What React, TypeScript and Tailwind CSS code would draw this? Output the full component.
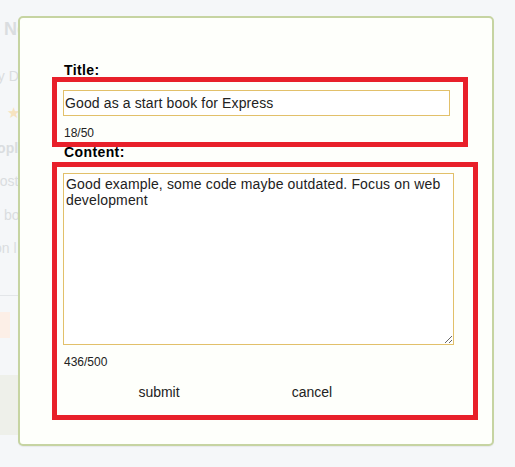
const titleText = "Good as a start book for Express";
const contentText =
  "Good example, some code maybe outdated. Focus on web development";

const BackgroundPage = () => {
  return (
    <div className="flex flex-col text-[#dadde0]">
      <div className="mt-[19px] ml-[4px] h-[20px] text-[18px] leading-[20px] font-bold whitespace-nowrap">
        New Books
      </div>
      <div className="mt-[29px] -ml-[10px] h-[16px] text-[14px] leading-[16px] whitespace-nowrap">
        by Dev
      </div>
      <div className="mt-[22px] ml-[7px] h-[14px] text-[15px] leading-[14px] text-[#f7e3c0]">
        ★
      </div>
      <div className="mt-[20px] -ml-[20px] h-[16px] text-[14px] leading-[16px] font-semibold whitespace-nowrap">
        People
      </div>
      <div className="mt-[17px] -ml-[12px] h-[16px] text-[14px] leading-[16px] whitespace-nowrap">
        most
      </div>
      <div className="mt-[18px] ml-[4px] h-[16px] text-[14px] leading-[16px] whitespace-nowrap">
        book
      </div>
      <div className="mt-[17px] -ml-[6px] h-[16px] text-[14px] leading-[16px] whitespace-nowrap">
        on l
      </div>
      <div className="mt-[39px] h-px w-[40px] bg-[#e3e6e9]" />
      <div className="mt-[16px] h-[26px] w-[10px] bg-[#fcefe7]" />
      <div className="mt-[37px] h-[60px] w-[40px] bg-[#eef0ea]" />
    </div>
  );
};

export default function App() {
  return (
    <div className="relative w-[515px] h-[467px] overflow-hidden bg-[#f5f7f9] font-['Liberation_Sans',Arial,sans-serif]">
      <BackgroundPage />

      <div className="absolute left-[18px] top-[16px] w-[476px] h-[430px] rounded-[5px] border-2 border-[#c6d4a2] bg-[#fefffb] shadow-[0_1px_1px_rgba(0,0,0,0.06)] pl-[32px] pt-[45px]">
        <div className="pl-[12px] h-[15px] text-[14px] leading-[15px] font-bold text-black tracking-[0.4px]">
          Title:
        </div>
        <div className="-mt-[1px] w-[416px] h-[70px] border-[5px] border-[#e8202a] pl-[6px] pt-[8px]">
          <input
            className="block w-[387px] h-[26px] border border-[#e2c06a] bg-white px-[1px] text-[14px] tracking-[0.12px] text-[#222] outline-none"
            defaultValue={titleText}
          />
          <div className="mt-[10px] pl-px h-[14px] text-[12px] leading-[14px] text-[#222]">
            18/50
          </div>
        </div>

        <div className="-mt-[2px] pl-[12px] h-[15px] text-[14px] leading-[15px] font-bold text-black tracking-[0.4px]">
          Content:
        </div>
        <div className="mt-[2px] w-[426px] h-[258px] border-[5px] border-[#e8202a] pl-[6px] pt-[6px]">
          <textarea
            className="block w-[391px] h-[172px] border border-[#e2c06a] bg-white p-[2px] text-[14px] leading-[16px] tracking-[0.15px] text-[#222] outline-none resize"
            defaultValue={contentText}
          />
          <div className="mt-[10px] pl-px h-[14px] text-[12px] leading-[14px] text-[#222]">
            436/500
          </div>
          <div className="mt-[15px] flex gap-[53px] pl-[46px]">
            <button className="w-[100px] text-center text-[14px] leading-[16px] text-[#222]">
              submit
            </button>
            <button className="w-[100px] text-center text-[14px] leading-[16px] text-[#222]">
              cancel
            </button>
          </div>
        </div>
      </div>
    </div>
  );
}
